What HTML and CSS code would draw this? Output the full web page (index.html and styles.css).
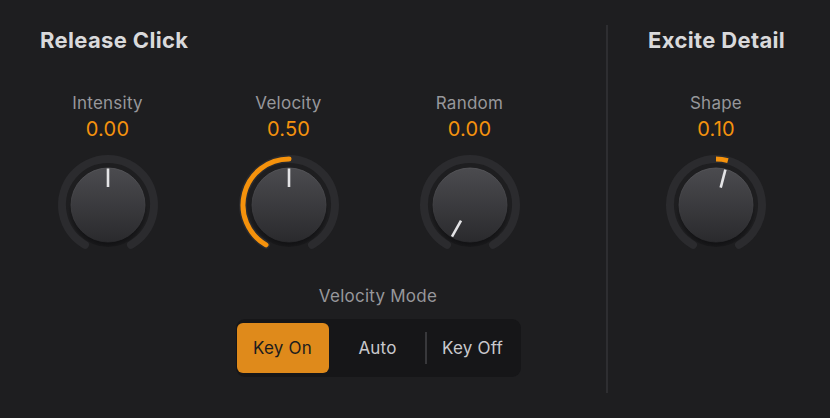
FILE: index.html
```html
<!DOCTYPE html>
<html>
<head>
<meta charset="utf-8">
<link rel="stylesheet" href="styles.css">
</head>
<body>
<svg class="defs" width="0" height="0">
  <defs>
    <linearGradient id="bodyGrad" x1="0" y1="0" x2="0" y2="1">
      <stop offset="0" stop-color="#4b4b4f"/>
      <stop offset="1" stop-color="#2a2a2d"/>
    </linearGradient>
    <linearGradient id="edgeGrad" x1="0" y1="0" x2="0" y2="1">
      <stop offset="0" stop-color="#5a5a5e"/>
      <stop offset="1" stop-color="#2a2a2d"/>
    </linearGradient>
    <radialGradient id="shadowGrad" cx="0.5" cy="0.55" r="0.5">
      <stop offset="0.8" stop-color="#111113" stop-opacity="0.9"/>
      <stop offset="1" stop-color="#111113" stop-opacity="0"/>
    </radialGradient>
  </defs>
</svg>
<div class="panel">
  <section class="left">
    <h2 class="title">Release Click</h2>
    <div class="knob-row">
      <div class="knob">
        <div class="label">Intensity</div>
        <div class="value">0.00</div>
        <svg class="dial" width="110" height="110" viewBox="0 0 110 110">
          <path class="ring" d="M32 94.84 A46 46 0 1 1 78 94.84"/>
          <circle cx="55" cy="57" r="40" fill="url(#shadowGrad)"/>
          <circle cx="55" cy="55" r="37" fill="url(#bodyGrad)" stroke="url(#edgeGrad)" stroke-width="0.8"/>
          <line class="pointer" x1="55" y1="18.5" x2="55" y2="37"/>
        </svg>
      </div>
      <div class="knob">
        <div class="label">Velocity</div>
        <div class="value">0.50</div>
        <svg class="dial" width="110" height="110" viewBox="0 0 110 110">
          <path class="ring" d="M32 94.84 A46 46 0 1 1 78 94.84"/>
          <path class="arc" d="M32 94.84 A46 46 0 0 1 55 9"/>
          <circle cx="55" cy="57" r="40" fill="url(#shadowGrad)"/>
          <circle cx="55" cy="55" r="37" fill="url(#bodyGrad)" stroke="url(#edgeGrad)" stroke-width="0.8"/>
          <line class="pointer" x1="55" y1="18.5" x2="55" y2="37"/>
        </svg>
      </div>
      <div class="knob">
        <div class="label">Random</div>
        <div class="value">0.00</div>
        <svg class="dial" width="110" height="110" viewBox="0 0 110 110">
          <path class="ring" d="M32 94.84 A46 46 0 1 1 78 94.84"/>
          <circle cx="55" cy="57" r="40" fill="url(#shadowGrad)"/>
          <circle cx="55" cy="55" r="37" fill="url(#bodyGrad)" stroke="url(#edgeGrad)" stroke-width="0.8"/>
          <line class="pointer" x1="37" y1="86.6" x2="46" y2="70.6"/>
        </svg>
      </div>
    </div>
    <div class="mode">
      <div class="label">Velocity Mode</div>
      <div class="segmented">
        <div class="seg active">Key On</div>
        <div class="seg">Auto</div>
        <div class="seg sep">Key Off</div>
      </div>
    </div>
  </section>
  <div class="divider"></div>
  <section class="right">
    <h2 class="title">Excite Detail</h2>
    <div class="knob-row single">
      <div class="knob">
        <div class="label">Shape</div>
        <div class="value">0.10</div>
        <svg class="dial" width="110" height="110" viewBox="0 0 110 110">
          <path class="ring" d="M32 94.84 A46 46 0 1 1 78 94.84"/>
          <path class="arc butt" d="M55 9 A46 46 0 0 1 66.9 10.57"/>
          <circle cx="55" cy="57" r="40" fill="url(#shadowGrad)"/>
          <circle cx="55" cy="55" r="37" fill="url(#bodyGrad)" stroke="url(#edgeGrad)" stroke-width="0.8"/>
          <line class="pointer" x1="64.4" y1="19.7" x2="59.7" y2="37.6"/>
        </svg>
      </div>
    </div>
  </section>
</div>
</body>
</html>
```

FILE: styles.css
```css
* { box-sizing: border-box; }
html, body {
  margin: 0;
  padding: 0;
  background: #1e1e20;
}
body {
  width: 830px;
  height: 418px;
  overflow: hidden;
  font-family: Inter, "Noto Sans", sans-serif;
}
.defs { position: absolute; width: 0; height: 0; }
.panel {
  display: flex;
  height: 418px;
}
.left {
  width: 606px;
  padding-top: 27px;
}
.right {
  flex: 1;
  padding-top: 27px;
  padding-left: 40px;
}
.title {
  margin: 0;
  font-size: 22px;
  line-height: 26px;
  font-weight: 700;
  color: #d9d9db;
  letter-spacing: 0.35px;
  white-space: nowrap;
}
.left .title { padding-left: 40px; }
.knob-row {
  display: flex;
  margin-top: 40px;
  padding-left: 17px;
}
.knob-row.single { padding-left: 0; }
.knob {
  width: 181px;
  display: flex;
  flex-direction: column;
  align-items: center;
}
.single .knob { width: 136px; }
.label {
  font-size: 17px;
  line-height: 20px;
  color: #97979b;
  letter-spacing: 0.25px;
  white-space: nowrap;
}
.value {
  margin-top: 4px;
  font-size: 20px;
  line-height: 24px;
  color: #f4920e;
  letter-spacing: 0.2px;
}
.dial {
  display: block;
  margin-top: 9px;
}
.ring {
  fill: none;
  stroke: #2b2b2e;
  stroke-width: 8;
  stroke-linecap: round;
}
.arc {
  fill: none;
  stroke: #f5920c;
  stroke-width: 5;
  stroke-linecap: round;
}
.arc.butt { stroke-linecap: butt; }
.pointer {
  stroke: #e4e4e6;
  stroke-width: 2.6;
}
.mode {
  display: flex;
  flex-direction: column;
  align-items: center;
  padding-left: 150px;
  margin-top: 26px;
}
.segmented {
  margin-top: 13px;
  display: flex;
  align-items: center;
  height: 58px;
  width: 285px;
  padding: 4px 2px 4px 1px;
  background: #161618;
  border-radius: 9px;
}
.seg {
  width: 94px;
  height: 50px;
  display: flex;
  align-items: center;
  justify-content: center;
  font-size: 17px;
  letter-spacing: 0.2px;
  color: #c9c9cd;
  border-radius: 6px;
}
.seg.active {
  width: 92px;
  margin-right: 2px;
  background: #df8a1b;
  color: #1c1c1e;
}
.seg.sep {
  border-left: 2px solid #38383b;
  border-radius: 0;
  height: 32px;
}
.divider {
  width: 2px;
  height: 368px;
  margin-top: 25px;
  background: #2e2e31;
}
```
